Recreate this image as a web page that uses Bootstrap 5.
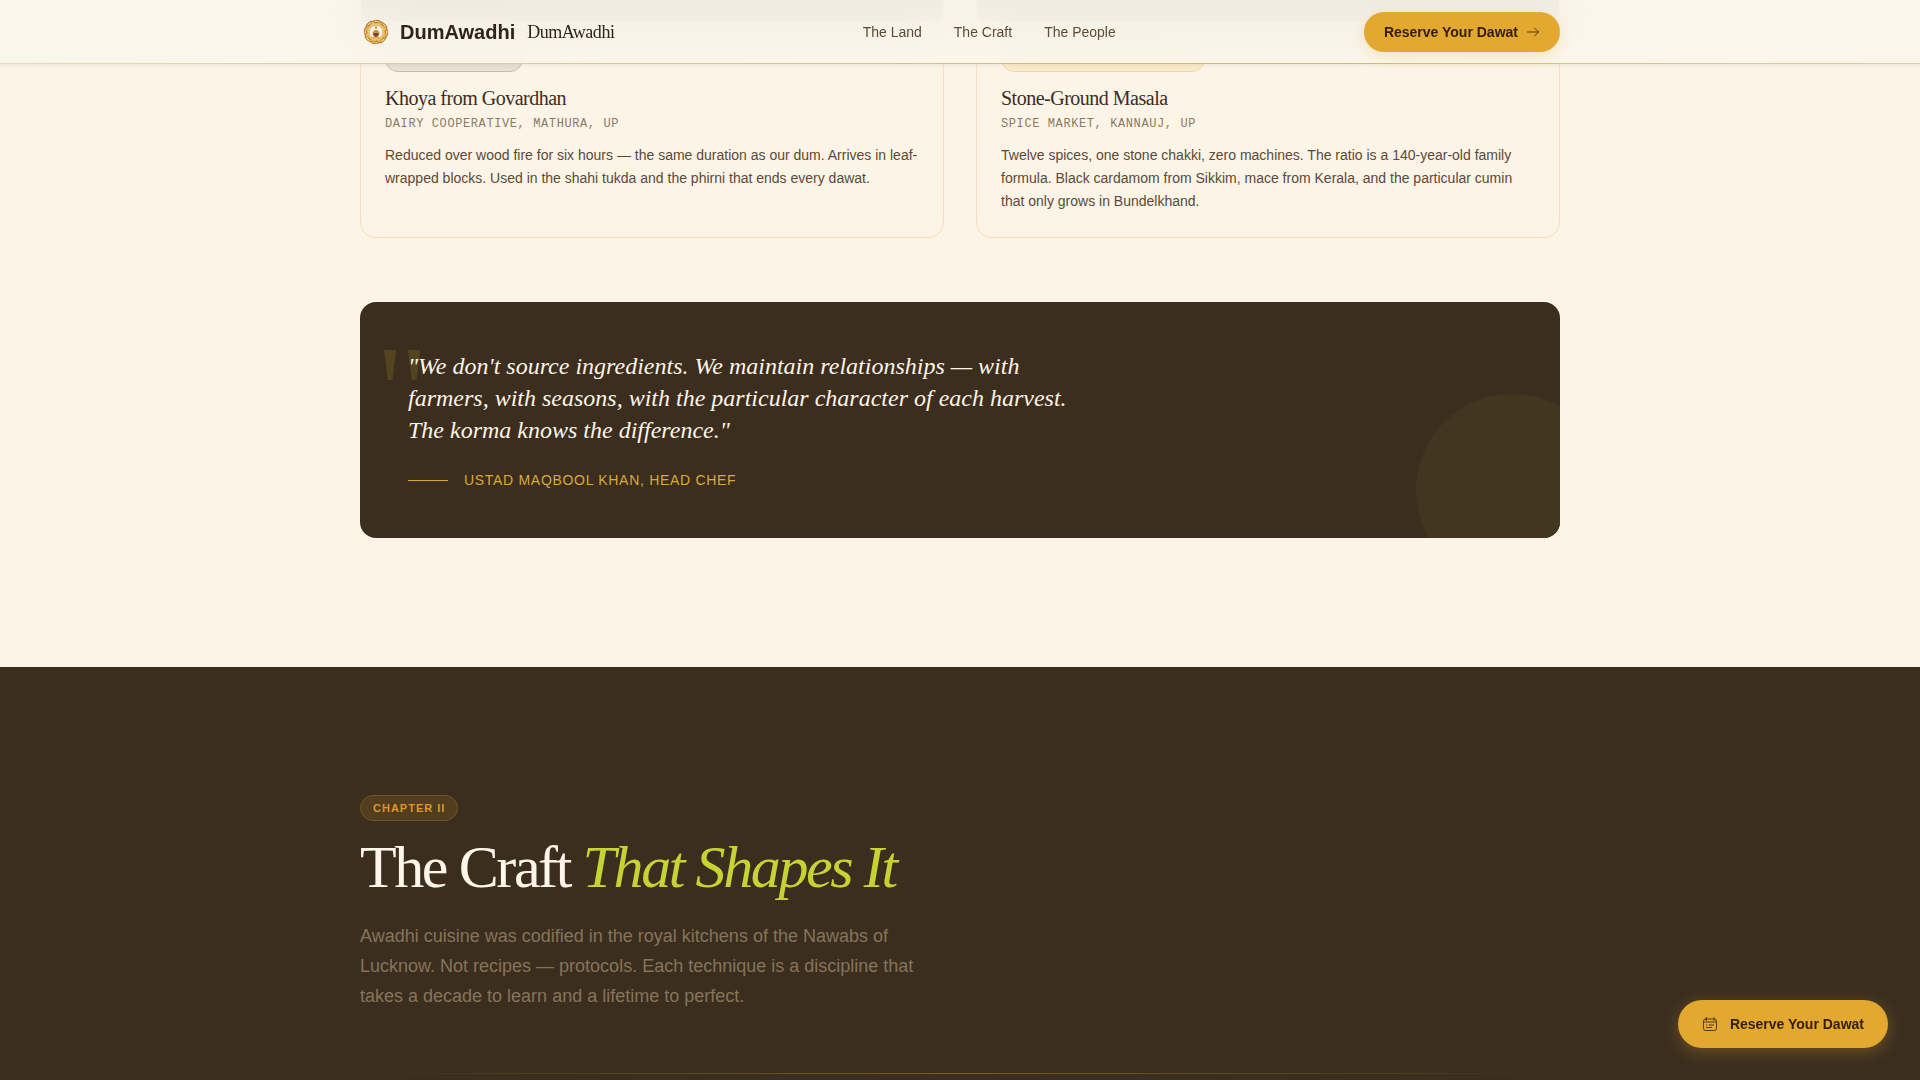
<!DOCTYPE html>
<html lang="en">
<head>
<meta charset="utf-8">
<meta name="viewport" content="width=device-width, initial-scale=1">
<title>DumAwadhi</title>
<link href="https://cdn.jsdelivr.net/npm/bootstrap@5.3.0/dist/css/bootstrap.min.css" rel="stylesheet">
<style>
  :root { --cream:#fcf4e7; --umber:#3b2e1f; --saffron:#e2a82f; --ink:#2f2419; }
  body { background:var(--cream); color:var(--ink); font-family:"Liberation Sans",Arial,sans-serif; font-size:14px; overflow-x:hidden; }
  .wrap { max-width:1200px; }
  .font-display { font-family:"Liberation Serif","Times New Roman",serif; letter-spacing:-.025em; font-weight:400; }

  .site-header { background:rgba(251,246,234,.88); backdrop-filter:blur(24px); height:64px; box-shadow:0 1px 4px rgba(140,110,40,.12); }
  .site-header::after { content:""; position:absolute; left:0; right:0; bottom:0; height:1px; background:linear-gradient(90deg,#e6dab8,#cfb76c 65%,#e0cf9c); }
  .brand-name { font-size:20px; color:var(--ink); }
  .brand-alt { font-size:18px; color:var(--ink); }
  .top-links a { color:#5a4c38; font-size:14px; }
  .btn-saffron { --bs-btn-color:#331e0a; --bs-btn-bg:var(--saffron); --bs-btn-border-color:var(--saffron); --bs-btn-hover-bg:#d69b22; --bs-btn-hover-border-color:#d69b22; --bs-btn-hover-color:#331e0a; border:0; font-size:14px; font-weight:700; line-height:20px; box-shadow:0 4px 14px rgba(226,168,47,.22); }
  .btn-top { height:40px; padding:0 20px; }
  .btn-float { height:48px; padding:0 24px; right:32px; bottom:32px; z-index:1031; gap:12px; box-shadow:0 4px 16px rgba(226,168,47,.3); }
  .btn-saffron svg { opacity:.8; }

  .source-card { border:1px solid #f2e1bd; border-top:0; border-radius:0 0 16px 16px; overflow:hidden; }
  .source-photo { height:22px; background:#8b857c; }
  .source-body { padding:24px; }
  .season-tag { height:26px; border-radius:13px; border:1px solid; }
  .tag-ash { width:138px; background:#e8e1d5; border-color:#c6bdae; }
  .tag-gold { width:204px; background:#faebcd; border-color:#efd9ab; }
  .source-title { font-size:20px; line-height:28px; margin:12px 0 4px; color:#3b2d1f; }
  .source-place { font-family:"Liberation Mono","Courier New",monospace; font-size:12px; line-height:16px; letter-spacing:.05em; color:#8b7a62; margin-bottom:12px; }
  .source-text { line-height:23px; color:#5a4a38; }

  .quote-panel { background:var(--umber); border-radius:16px; padding:48px; margin-top:64px; }
  .quote-panel::before { content:"\""; position:absolute; left:16px; top:24px; font:128px/128px "Liberation Serif",serif; color:#54431f; }
  .quote-panel::after { content:""; position:absolute; right:-48px; bottom:-48px; width:192px; height:192px; border-radius:50%; background:#433620; }
  .quote-text { font-family:"Liberation Serif",serif; font-style:italic; font-size:24px; line-height:32px; max-width:672px; color:#fcf4e8; }
  .quote-by { color:#d9a93a; line-height:20px; letter-spacing:.05em; gap:16px; margin-top:24px; }
  .quote-by::before { content:""; width:40px; height:1px; background:#d9a93a; }
  .pad-end { padding-bottom:129px; }

  .craft { background:var(--umber); padding:128px 0; }
  .chapter-tag { height:26px; padding:0 12px; border:1px solid #6f5522; background:#523e1f; color:#dc952c; font-size:11px; font-weight:700; letter-spacing:1px; }
  .craft-title { font-size:60px; line-height:60px; letter-spacing:-.04em; color:#fff6ea; margin:16px 0 24px; }
  .craft-title em { color:#c6d433; }
  .craft-lead { font-size:18px; line-height:30px; color:#86745a; max-width:576px; margin-bottom:62px; }
  .rule { height:1px; background:linear-gradient(90deg,transparent,#786024,transparent); }
</style>
<script src="https://cdn.jsdelivr.net/npm/bootstrap@5.3.0/dist/js/bootstrap.bundle.min.js"></script>
</head>
<body>
<header class="site-header fixed-top">
  <div class="wrap mx-auto h-100 d-flex align-items-center justify-content-between">
    <a href="#" class="d-flex align-items-center text-decoration-none">
      <svg class="me-2" width="32" height="32" viewBox="0 0 32 32" aria-hidden="true">
        <circle cx="16" cy="16" r="9" fill="none" stroke="#e9b94f" stroke-width="2.500"/>
        <g fill="none" stroke="#b8791f" stroke-width="1">
          <path id="petal" d="M8.500 10.500Q12 3 19 4.500Q22 5.500 22.500 9.500"/>
          <use href="#petal" transform="rotate(45 16 16)"/><use href="#petal" transform="rotate(90 16 16)"/>
          <use href="#petal" transform="rotate(135 16 16)"/><use href="#petal" transform="rotate(180 16 16)"/>
          <use href="#petal" transform="rotate(225 16 16)"/><use href="#petal" transform="rotate(270 16 16)"/>
          <use href="#petal" transform="rotate(315 16 16)"/>
        </g>
        <circle cx="16" cy="16" r="7" fill="#fdf6e6" stroke="#c98e2c" stroke-width=".8"/>
        <path d="M16 9.500c2 2 1.500 3 0 4-1.500-1-2-2 0-4Z" fill="#dca53c"/>
        <path d="M13 16.500q0-2.500 3-2.500t3 2.500Z" fill="#c48a43"/>
        <path d="M12.500 16.500h7q0 3.500-2 4.500h-3q-2-1-2-4.500Z" fill="#a9652e"/>
        <path d="M14.500 17.500h3v2h-3z" fill="#59331d"/>
        <path d="M12.500 21.700h7" stroke="#d59b30"/>
      </svg>
      <span class="brand-name fw-bold">DumAwadhi</span>
      <span class="brand-alt font-display ms-2 ps-1">DumAwadhi</span>
    </a>
    <nav class="top-links d-flex" aria-label="Main">
      <a href="#land" class="text-decoration-none me-3 pe-3">The Land</a>
      <a href="#craft" class="text-decoration-none me-3 pe-3">The Craft</a>
      <a href="#people" class="text-decoration-none">The People</a>
    </nav>
    <button type="button" class="btn btn-saffron btn-top rounded-pill d-flex align-items-center gap-2">
      Reserve Your Dawat
      <svg width="14" height="14" viewBox="0 0 14 14" fill="none" stroke="currentColor" stroke-linecap="round" stroke-linejoin="round" aria-hidden="true"><path d="M1.500 7h11M8.500 3l4 4-4 4"/></svg>
    </button>
  </div>
</header>

<main>
  <section id="land" class="pad-end">
    <div class="wrap mx-auto">
      <div class="d-flex align-items-stretch">
        <article class="source-card flex-fill w-50 me-3">
          <div class="source-photo"></div>
          <div class="source-body">
            <div class="season-tag tag-ash"></div>
            <h3 class="source-title font-display">Khoya from Govardhan</h3>
            <p class="source-place text-uppercase">Dairy Cooperative, Mathura, UP</p>
            <p class="source-text mb-0">Reduced over wood fire for six hours — the same duration as our dum. Arrives in leaf-wrapped blocks. Used in the shahi tukda and the phirni that ends every dawat.</p>
          </div>
        </article>
        <article class="source-card flex-fill w-50 ms-3">
          <div class="source-photo"></div>
          <div class="source-body">
            <div class="season-tag tag-gold"></div>
            <h3 class="source-title font-display">Stone-Ground Masala</h3>
            <p class="source-place text-uppercase">Spice Market, Kannauj, UP</p>
            <p class="source-text mb-0">Twelve spices, one stone chakki, zero machines. The ratio is a 140-year-old family formula. Black cardamom from Sikkim, mace from Kerala, and the particular cumin that only grows in Bundelkhand.</p>
          </div>
        </article>
      </div>
      <figure class="quote-panel position-relative overflow-hidden mb-0">
        <blockquote class="quote-text position-relative z-1 mb-0">"We don't source ingredients. We maintain relationships — with farmers, with seasons, with the particular character of each harvest. The korma knows the difference."</blockquote>
        <figcaption class="quote-by d-flex align-items-center text-uppercase">Ustad Maqbool Khan, Head Chef</figcaption>
      </figure>
    </div>
  </section>

  <section id="craft" class="craft">
    <div class="wrap mx-auto">
      <span class="chapter-tag rounded-pill d-table-cell align-middle text-uppercase">Chapter II</span>
      <h2 class="craft-title font-display">The Craft <em>That Shapes It</em></h2>
      <p class="craft-lead">Awadhi cuisine was codified in the royal kitchens of the Nawabs of Lucknow. Not recipes — protocols. Each technique is a discipline that takes a decade to learn and a lifetime to perfect.</p>
      <div class="rule"></div>
    </div>
  </section>
</main>

<button type="button" class="btn btn-saffron btn-float rounded-pill position-fixed d-flex align-items-center">
  <svg width="16" height="16" viewBox="0 0 16 16" fill="none" stroke="currentColor" stroke-linecap="round" aria-hidden="true"><rect x="1.500" y="3" width="13" height="11.500" rx="2"/><path d="M1.500 6h13M4.500 1.500v3M12 1.500v3M7 9h4.500M4.500 9h.2M4.500 11.500h5"/></svg>
  Reserve Your Dawat
</button>
</body>
</html>
